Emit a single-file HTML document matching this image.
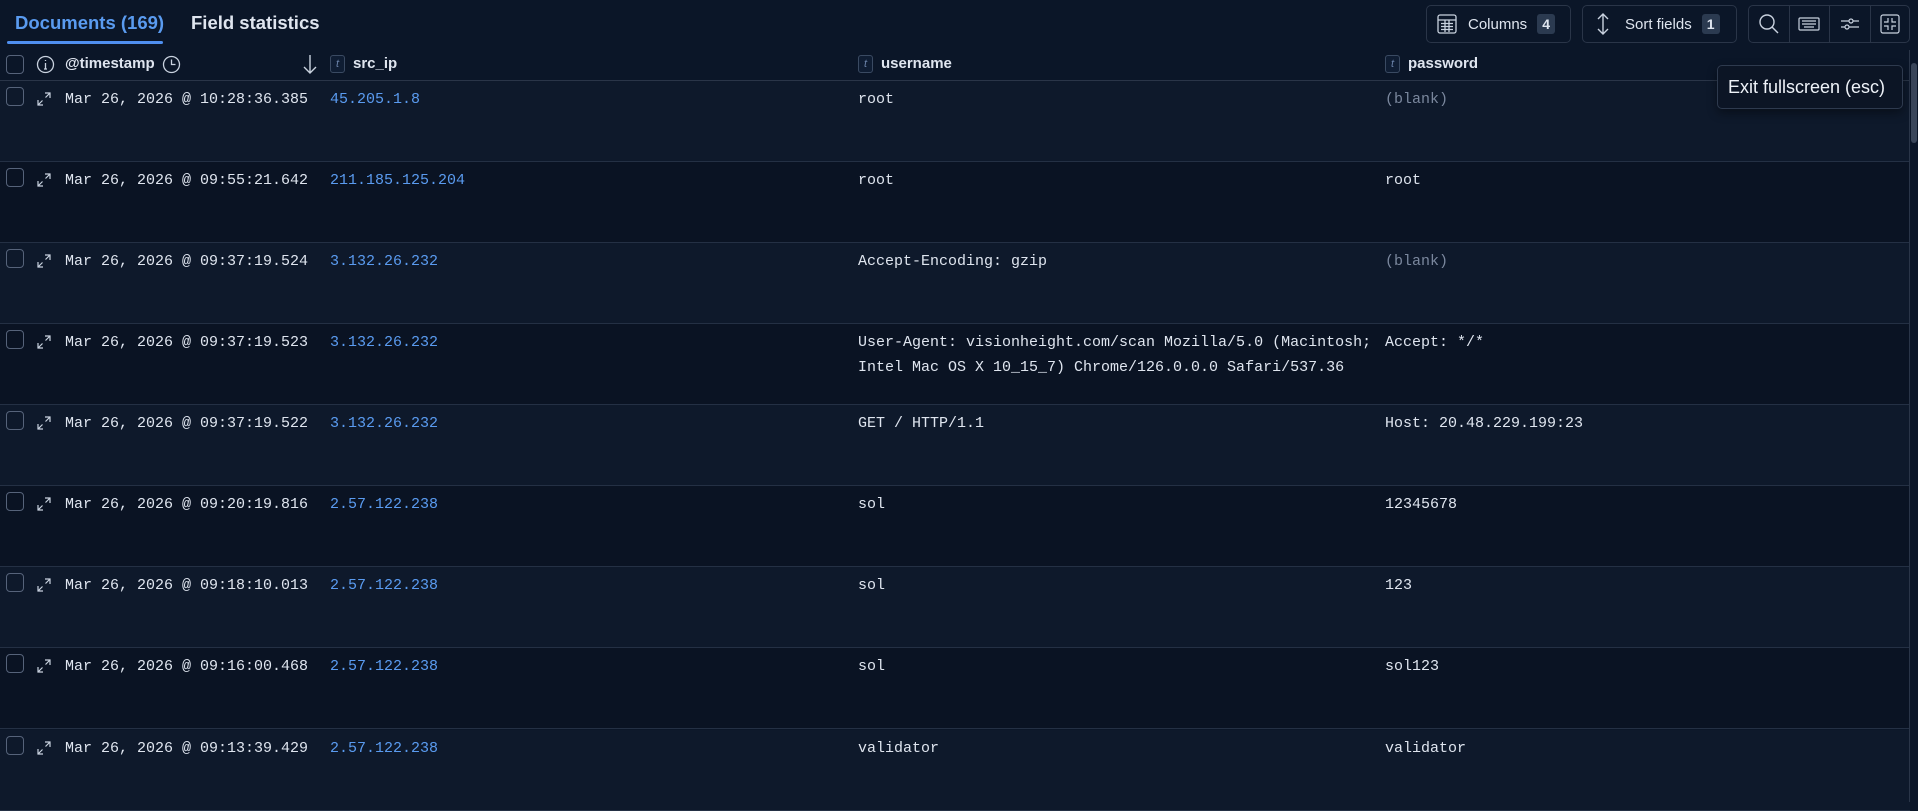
<!DOCTYPE html>
<html><head><meta charset="utf-8"><style>
*{box-sizing:border-box;margin:0;padding:0}
body{width:1918px;height:802px;overflow:hidden;background:#0b1628;font-family:"Liberation Sans",sans-serif;color:#dfe5ef;position:relative}
.tab{position:absolute;top:12px;font-size:18.5px;font-weight:bold}
.ul{position:absolute;left:7px;top:41px;width:156px;height:3px;background:#4f8ff0;border-radius:2px}
.btn{position:absolute;top:5px;height:38px;border:1px solid #2a3548;border-radius:5px;display:flex;align-items:center;font-size:15px;color:#dfe5ef}
.badge{background:#2b3a50;border-radius:3px;font-weight:bold;padding:2px 5px;margin-left:10px;font-size:14px}
.hdr{position:absolute;top:50px;left:0;width:1910px;height:31px;border-bottom:1px solid #2a3548;font-size:15px;font-weight:bold}
.cb{position:absolute;width:18px;height:19px;border:1px solid #56637a;border-radius:4px;left:6px}
.row{position:absolute;left:0;width:1910px;height:81px;border-bottom:1px solid #243044;font-family:"Liberation Mono",monospace;font-size:15px;color:#dfe5ef}
.row.o{background:#0e192b}.row.e{background:#0a1323}
.row span{position:absolute;top:6px;line-height:25px}
.ip{color:#5a9bf0}
.bl{color:#7a879d}
.t{display:inline-block;width:15px;height:18px;border:1px solid #3a4a62;border-radius:3px;background:#0f1d33;color:#6a82a8;font-size:11px;font-style:italic;text-align:center;line-height:16px;vertical-align:middle;margin-right:8px;font-weight:normal}
.ex{position:absolute;left:37px;top:11px}
</style></head><body>
<div class="tab" style="left:15px;color:#5a9bf0">Documents (169)</div>
<div class="tab" style="left:191px">Field statistics</div>
<div class="ul"></div>

<div class="btn" style="left:1426px;width:145px;padding-left:9px">
<svg width="22" height="22" viewBox="0 0 22 22" fill="none" stroke="#c9d2df" stroke-width="1.3"><rect x="2" y="2" width="18" height="18" rx="2"/><path d="M2 7h18M5 10.5h12M5 13.5h12M5 16.5h12M9 7v12M13 7v12"/></svg>
<span style="margin-left:10px">Columns</span><span class="badge">4</span></div>
<div class="btn" style="left:1582px;width:155px;padding-left:12px">
<svg width="16" height="24" viewBox="0 0 16 24" fill="none" stroke="#c9d2df" stroke-width="1.4"><path d="M8 2v20M3 7l5-5 5 5M3 17l5 5 5-5"/></svg>
<span style="margin-left:14px">Sort fields</span><span class="badge">1</span></div>
<div class="btn" style="left:1748px;width:162px">
<div style="width:41px;height:100%;display:flex;align-items:center;justify-content:center;border-right:1px solid #2a3548"><svg width="22" height="22" viewBox="0 0 22 22" fill="none" stroke="#c9d2df" stroke-width="1.4"><circle cx="9" cy="9" r="7"/><path d="M14 14l6 6"/></svg></div>
<div style="width:41px;height:100%;display:flex;align-items:center;justify-content:center;border-right:1px solid #2a3548"><svg width="22" height="14" viewBox="0 0 22 14" fill="none" stroke="#c9d2df" stroke-width="1.2"><rect x="1" y="1" width="20" height="12" rx="1"/><path d="M4 4h14M4 7h14M6 10h10"/></svg></div>
<div style="width:41px;height:100%;display:flex;align-items:center;justify-content:center;border-right:1px solid #2a3548"><svg width="20" height="14" viewBox="0 0 20 14" fill="none" stroke="#c9d2df" stroke-width="1.2"><path d="M1 4h8M13 4h6M1 10h4M9 10h10"/><circle cx="11" cy="4" r="2"/><circle cx="7" cy="10" r="2"/></svg></div>
<div style="width:39px;height:100%;display:flex;align-items:center;justify-content:center"><svg width="20" height="20" viewBox="0 0 20 20" fill="none" stroke="#c9d2df" stroke-width="1.2"><rect x="1" y="1" width="18" height="18" rx="2"/><path d="M8 4v4H4M12 4v4h4M8 16v-4H4M12 16v-4h4"/></svg></div>
</div>

<div class="hdr">
<div class="cb" style="top:5px"></div>
<svg style="position:absolute;left:36px;top:5px" width="19" height="19" viewBox="0 0 19 19" fill="none" stroke="#c9d2df" stroke-width="1.3"><circle cx="9.5" cy="9.5" r="8"/><path d="M9.5 8v6M8 14h3M9.5 5v1"/></svg>
<span style="position:absolute;left:65px;top:5px">@timestamp</span>
<svg style="position:absolute;left:162px;top:5px" width="19" height="19" viewBox="0 0 19 19" fill="none" stroke="#c9d2df" stroke-width="1.3"><circle cx="9.5" cy="9.5" r="8"/><path d="M9.5 4.5v5h4"/></svg>
<svg style="position:absolute;left:301px;top:3px" width="18" height="22" viewBox="0 0 18 22" fill="none" stroke="#c9d2df" stroke-width="1.4"><path d="M9 2v18M3 14l6 6 6-6"/></svg>
<span style="position:absolute;left:330px;top:5px"><span class="t">t</span>src_ip</span>
<span style="position:absolute;left:858px;top:5px"><span class="t">t</span>username</span>
<span style="position:absolute;left:1385px;top:5px"><span class="t">t</span>password</span>
</div>

<svg width="0" height="0" style="position:absolute"><defs><symbol id="ex" viewBox="0 0 14 14"><path d="M8 1h5v5M13 1L8.5 5.5M6 13H1V8M1 13l4.5-4.5" fill="none" stroke="#c9d2df" stroke-width="1.2"/></symbol></defs></svg>

<div class="row o" style="top:81px"><div class="cb" style="top:6px"></div><svg class="ex" width="14" height="14"><use href="#ex"/></svg><span style="left:65px">Mar 26, 2026 @ 10:28:36.385</span><span class="ip" style="left:330px">45.205.1.8</span><span style="left:858px">root</span><span class="bl" style="left:1385px">(blank)</span></div>
<div class="row e" style="top:162px"><div class="cb" style="top:6px"></div><svg class="ex" width="14" height="14"><use href="#ex"/></svg><span style="left:65px">Mar 26, 2026 @ 09:55:21.642</span><span class="ip" style="left:330px">211.185.125.204</span><span style="left:858px">root</span><span style="left:1385px">root</span></div>
<div class="row o" style="top:243px"><div class="cb" style="top:6px"></div><svg class="ex" width="14" height="14"><use href="#ex"/></svg><span style="left:65px">Mar 26, 2026 @ 09:37:19.524</span><span class="ip" style="left:330px">3.132.26.232</span><span style="left:858px">Accept-Encoding: gzip</span><span class="bl" style="left:1385px">(blank)</span></div>
<div class="row e" style="top:324px"><div class="cb" style="top:6px"></div><svg class="ex" width="14" height="14"><use href="#ex"/></svg><span style="left:65px">Mar 26, 2026 @ 09:37:19.523</span><span class="ip" style="left:330px">3.132.26.232</span><span style="left:858px">User-Agent: visionheight.com/scan Mozilla/5.0 (Macintosh;<br>Intel Mac OS X 10_15_7) Chrome/126.0.0.0 Safari/537.36</span><span style="left:1385px">Accept: */*</span></div>
<div class="row o" style="top:405px"><div class="cb" style="top:6px"></div><svg class="ex" width="14" height="14"><use href="#ex"/></svg><span style="left:65px">Mar 26, 2026 @ 09:37:19.522</span><span class="ip" style="left:330px">3.132.26.232</span><span style="left:858px">GET / HTTP/1.1</span><span style="left:1385px">Host: 20.48.229.199:23</span></div>
<div class="row e" style="top:486px"><div class="cb" style="top:6px"></div><svg class="ex" width="14" height="14"><use href="#ex"/></svg><span style="left:65px">Mar 26, 2026 @ 09:20:19.816</span><span class="ip" style="left:330px">2.57.122.238</span><span style="left:858px">sol</span><span style="left:1385px">12345678</span></div>
<div class="row o" style="top:567px"><div class="cb" style="top:6px"></div><svg class="ex" width="14" height="14"><use href="#ex"/></svg><span style="left:65px">Mar 26, 2026 @ 09:18:10.013</span><span class="ip" style="left:330px">2.57.122.238</span><span style="left:858px">sol</span><span style="left:1385px">123</span></div>
<div class="row e" style="top:648px"><div class="cb" style="top:6px"></div><svg class="ex" width="14" height="14"><use href="#ex"/></svg><span style="left:65px">Mar 26, 2026 @ 09:16:00.468</span><span class="ip" style="left:330px">2.57.122.238</span><span style="left:858px">sol</span><span style="left:1385px">sol123</span></div>
<div class="row o" style="top:730px"><div class="cb" style="top:6px"></div><svg class="ex" width="14" height="14"><use href="#ex"/></svg><span style="left:65px">Mar 26, 2026 @ 09:13:39.429</span><span class="ip" style="left:330px">2.57.122.238</span><span style="left:858px">validator</span><span style="left:1385px">validator</span></div>

<div style="position:absolute;left:1909px;top:50px;width:1px;height:752px;background:#2a3548"></div>
<div style="position:absolute;left:1911px;top:63px;width:6px;height:80px;background:#3a465a;border-radius:3px"></div>

<div style="position:absolute;left:1717px;top:65px;width:186px;height:44px;background:#0c1525;border:1px solid #2e3a4e;border-radius:5px;font-size:18px;color:#eef2f8;line-height:42px;padding-left:10px;box-shadow:0 4px 10px rgba(0,0,0,.4)">Exit fullscreen (esc)</div>
</body></html>
